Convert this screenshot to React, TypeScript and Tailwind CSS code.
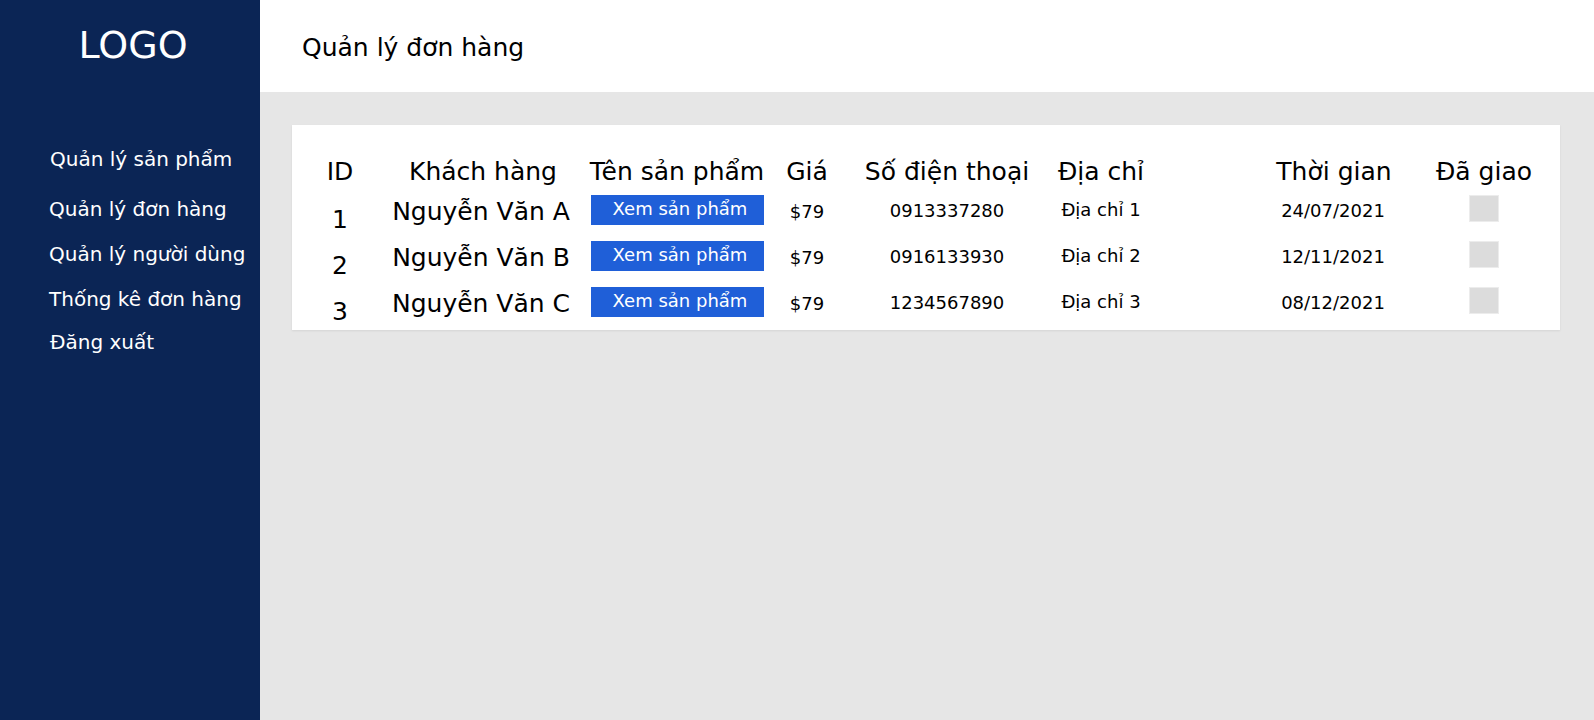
import React from "react";

const font = { fontFamily: '"DejaVu Sans", "Noto Sans", sans-serif' };

const rows = [
  { id: "1", name: "Nguyễn Văn A", price: "$79", phone: "0913337280", addr: "Địa chỉ 1", date: "24/07/2021" },
  { id: "2", name: "Nguyễn Văn B", price: "$79", phone: "0916133930", addr: "Địa chỉ 2", date: "12/11/2021" },
  { id: "3", name: "Nguyễn Văn C", price: "$79", phone: "1234567890", addr: "Địa chỉ 3", date: "08/12/2021" },
];

const gridCls =
  "grid grid-cols-[96px_190px_198px_62px_218px_90px_124px_128px_10px_152px]";

export default function App() {
  return (
    <div className="flex h-screen w-full" style={font}>
      <aside className="w-[260px] shrink-0 bg-[#0b2555] text-white flex flex-col">
        <div className="pt-[23px] pl-[6px] text-center text-[38px] leading-[44px]">LOGO</div>
        <nav className="flex flex-col text-[20px] leading-[23px]">
          <div className="mt-[81px] pl-[50px]">Quản lý sản phẩm</div>
          <div className="mt-[27px] pl-[49px]">Quản lý đơn hàng</div>
          <div className="mt-[22px] pl-[49px]">Quản lý người dùng</div>
          <div className="mt-[22px] pl-[49px]">Thống kê đơn hàng</div>
          <div className="mt-[20px] pl-[50px]">Đăng xuất</div>
        </nav>
      </aside>
      <main className="flex-1 flex flex-col">
        <header className="h-[92px] shrink-0 bg-white flex items-center pl-[42px] pt-[4px] text-[25px] text-black">
          Quản lý đơn hàng
        </header>
        <section className="flex-1 bg-[#e6e6e6] pt-[33px] pl-8 pr-[34px]">
          <div className="bg-white pt-[32px] pb-[5px] shadow-[0_1px_2px_rgba(0,0,0,0.08)] text-black">
            <div className={`${gridCls} h-[30px] text-[25px] leading-[30px] text-center`}>
              <div>ID</div>
              <div>Khách hàng</div>
              <div className="whitespace-nowrap">Tên sản phẩm</div>
              <div>Giá</div>
              <div className="whitespace-nowrap">Số điện thoại</div>
              <div className="whitespace-nowrap">Địa chỉ</div>
              <div></div>
              <div className="whitespace-nowrap">Thời gian</div>
              <div></div>
              <div className="whitespace-nowrap">Đã giao</div>
            </div>
            {rows.map((r) => (
              <div key={r.id} className={`${gridCls} h-[46px] items-start text-center`}>
                <div className="mt-[18px] text-[25px] leading-[30px]">{r.id}</div>
                <div className="mt-[10px] pr-[4px] text-[25px] leading-[30px] whitespace-nowrap">{r.name}</div>
                <div className="mt-[8px] flex justify-center">
                  <button className="w-[173px] h-[30px] bg-[#1f5fd8] text-white text-[18px] leading-[21px] pl-[6px] pb-[3px] whitespace-nowrap">
                    Xem sản phẩm
                  </button>
                </div>
                <div className="mt-[14px] text-[18px] leading-[21px]">{r.price}</div>
                <div className="mt-[13px] text-[18px] leading-[21px]">{r.phone}</div>
                <div className="mt-[12px] text-[18px] leading-[21px] whitespace-nowrap">{r.addr}</div>
                <div></div>
                <div className="mt-[13px] pr-[2px] text-[18px] leading-[21px]">{r.date}</div>
                <div></div>
                <div className="mt-[8px] flex justify-center">
                  <div className="w-[30px] h-[27px] bg-[#dcdcdc] border border-[#ececec]"></div>
                </div>
              </div>
            ))}
          </div>
        </section>
      </main>
    </div>
  );
}
